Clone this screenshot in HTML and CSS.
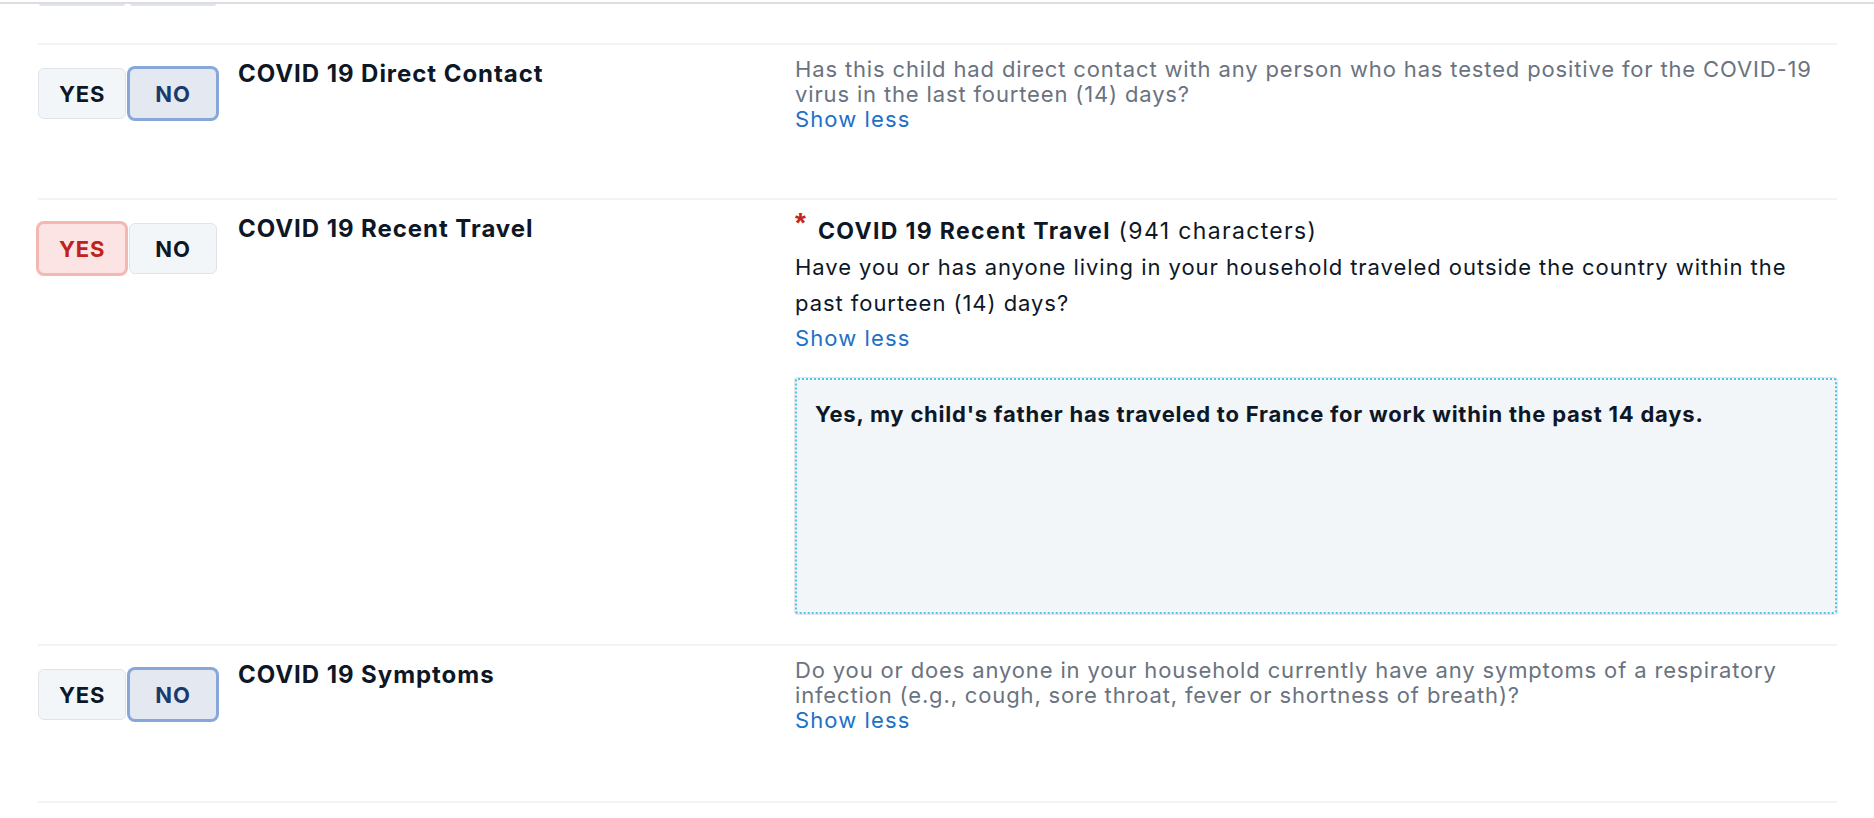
FILE: index.html
```html
<!DOCTYPE html>
<html lang="en">
<head>
<meta charset="utf-8">
<title>COVID 19 Questions</title>
<link rel="stylesheet" href="styles.css">
</head>
<body>
<div class="topbar"></div>
<main class="form">
  <div class="stub">
    <span class="stub-btn"></span>
    <span class="stub-btn"></span>
  </div>

  <section class="q">
    <div class="toggle">
      <button class="opt">YES</button>
      <button class="opt opt-no-on">NO</button>
    </div>
    <h3 class="q-title">COVID 19 Direct Contact</h3>
    <div class="q-body">
      <p class="q-desc">Has this child had direct contact with any person who has tested positive for the COVID-19 virus in the last fourteen (14) days?</p>
      <a class="show-less" href="#">Show less</a>
    </div>
  </section>

  <section class="q">
    <div class="toggle">
      <button class="opt opt-yes-on">YES</button>
      <button class="opt">NO</button>
    </div>
    <h3 class="q-title">COVID 19 Recent Travel</h3>
    <div class="q-body q-body-open">
      <div class="field-label"><span class="req">*</span><strong>COVID 19 Recent Travel</strong> (941 characters)</div>
      <p class="q-desc-dark">Have you or has anyone living in your household traveled outside the country within the past fourteen (14) days?</p>
      <a class="show-less show-less-open" href="#">Show less</a>
      <textarea class="answer" readonly>Yes, my child's father has traveled to France for work within the past 14 days.</textarea>
    </div>
  </section>

  <section class="q q-last">
    <div class="toggle">
      <button class="opt">YES</button>
      <button class="opt opt-no-on">NO</button>
    </div>
    <h3 class="q-title">COVID 19 Symptoms</h3>
    <div class="q-body">
      <p class="q-desc">Do you or does anyone in your household currently have any symptoms of a respiratory infection (e.g., cough, sore throat, fever or shortness of breath)?</p>
      <a class="show-less" href="#">Show less</a>
    </div>
  </section>
</main>
</body>
</html>
```

FILE: styles.css
```css
* { box-sizing: border-box; }

html, body {
  margin: 0;
  padding: 0;
  background: #ffffff;
}

body {
  font-family: Inter, "Liberation Sans", Arial, sans-serif;
  color: #0e1726;
}

.topbar {
  height: 2px;
  border-bottom: 2px solid #dadee3;
  box-sizing: content-box;
  background: #ffffff;
}

.form {
  padding: 0 37px 0 38px;
}

.stub {
  height: 39px;
  display: flex;
  gap: 3px;
  align-items: flex-start;
}

.stub-btn {
  width: 86px;
  height: 2px;
  background: #e1e5ea;
  border-radius: 0 0 6px 6px;
  margin: 0 1px;
}

.q {
  display: grid;
  grid-template-columns: 179px 536px 1fr;
  column-gap: 21px;
  align-items: start;
  border-top: 2px solid #f1f3f5;
  padding: 12px 0 30px;
  min-height: 155px;
}

.q-last {
  border-bottom: 2px solid #f1f3f5;
  min-height: 159px;
}

.toggle {
  display: flex;
  gap: 3px;
  margin-top: 11px;
}

.opt {
  width: 88px;
  height: 51px;
  display: flex;
  align-items: center;
  justify-content: center;
  padding: 0;
  font-family: Inter, "Liberation Sans", Arial, sans-serif;
  font-size: 22px;
  letter-spacing: 0.8px;
  font-weight: 700;
  color: #0e1726;
  background: #f3f6f9;
  border: 1px solid #dfe4ea;
  border-radius: 6px;
  cursor: pointer;
}

.opt-no-on {
  background: #e4e9f1;
  border-color: #87a7d8;
  box-shadow: 0 0 0 2px #87a7d8;
  color: #1b3a6c;
}

.opt-yes-on {
  background: #fbe4e3;
  border-color: #f4b8b1;
  box-shadow: 0 0 0 2px #f4b8b1;
  color: #c0211b;
}

.q-title {
  margin: 3px 0 0;
  font-size: 24px;
  letter-spacing: 0.95px;
  line-height: 28px;
  font-weight: 700;
  color: #0e1726;
}

.q-body {
  display: flex;
  flex-direction: column;
  align-items: flex-start;
}

.q-desc {
  margin: 0;
  font-size: 22px;
  letter-spacing: 0.85px;
  line-height: 25px;
  color: #6a7380;
}

.show-less {
  font-size: 22px;
  letter-spacing: 1.1px;
  line-height: 25px;
  color: #2170c7;
  text-decoration: none;
}

.field-label {
  font-size: 23px;
  letter-spacing: 1.35px;
  line-height: 35px;
  color: #0e1726;
}

.field-label strong {
  font-weight: 700;
}

.req {
  color: #c8231a;
  font-family: "Liberation Sans", Arial, sans-serif;
  font-weight: 700;
  font-size: 28px;
  letter-spacing: 0;
  position: relative;
  top: -7px;
  margin-right: 12px;
}

.q-desc-dark {
  margin: 0;
  max-width: 1012px;
  font-size: 22px;
  letter-spacing: 0.95px;
  line-height: 36px;
  color: #0e1726;
}

.show-less-open {
  line-height: 35px;
}

.answer {
  display: block;
  width: 100%;
  height: 236px;
  margin-top: 22px;
  padding: 20px 18px;
  resize: none;
  font-family: Inter, "Liberation Sans", Arial, sans-serif;
  font-size: 22px;
  letter-spacing: 0.78px;
  line-height: 28px;
  font-weight: 700;
  color: #0e1726;
  background: #f2f6f9;
  border: 2px dotted #4fc5ea;
  border-radius: 3px;
  box-shadow: 0 0 0 1px #e3e7eb;
  outline: none;
}
```
